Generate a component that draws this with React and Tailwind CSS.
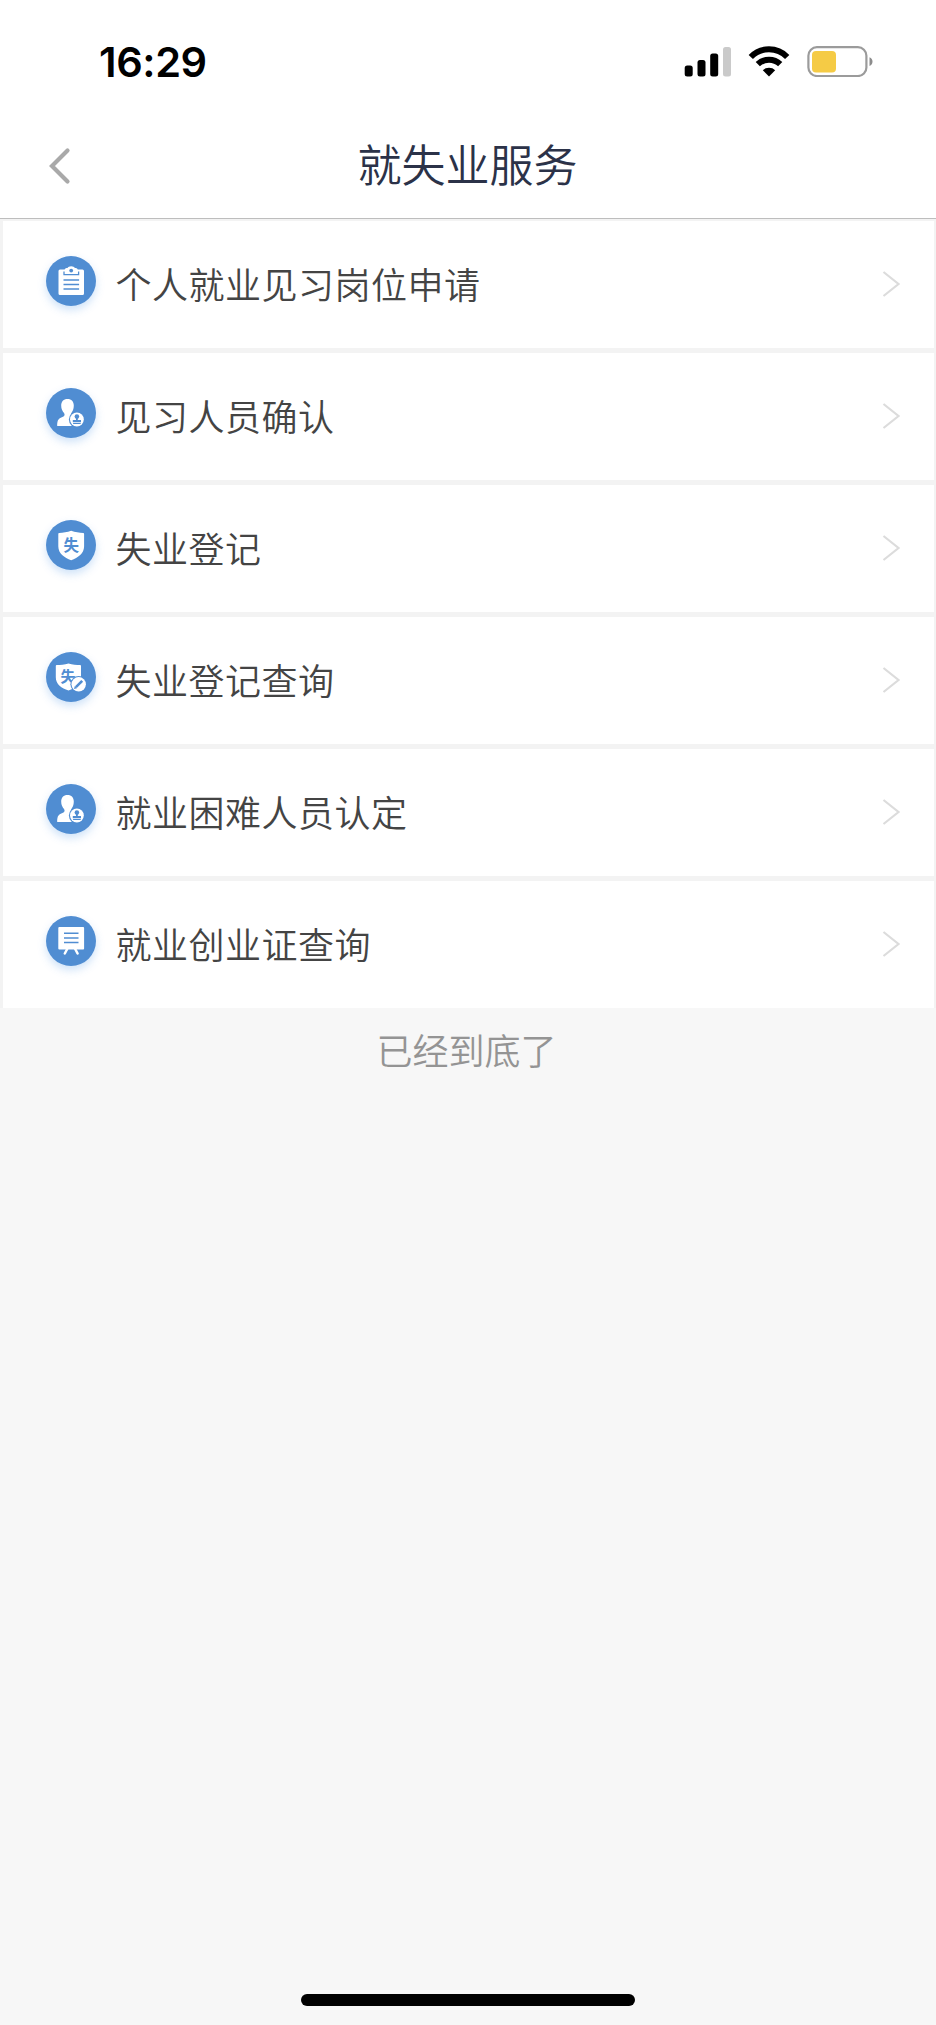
import React from 'react';

const ClipboardIcon = () => (
  <>
    <path
      d="M14 13.500h4.600c.6-1.200 1.700-1.400 2.900-1.500.6-1 1.900-1.700 3.700-1.700s3.100.7 3.700 1.700c1.200.1 2.300.3 2.900 1.500h4.700a1.500 1.500 0 0 1 1.500 1.500v22.500a1.500 1.500 0 0 1-1.500 1.500H14a1.500 1.500 0 0 1-1.500-1.500V15a1.500 1.500 0 0 1 1.500-1.500z"
      fill="#fff"
    />
    <circle cx="25.200" cy="14.600" r="1.900" fill="#508dd2" />
    <path
      d="M18 15.500v3.100h14.600v-3.100M17.500 24h15.600M17.500 28.500h15.600M17.500 33h15.600"
      fill="none"
      stroke="#508dd2"
      strokeWidth="1.300"
    />
  </>
);

const PersonIcon = () => (
  <>
    <path
      d="M21.500 11c4 0 6.300 2.600 6.300 6.800 0 3.200-1.200 5.500-2.400 7.200-.9 1.300-.7 3 .5 3.800l4.100 2.200v7H11.200c0-4.800.7-7.100 3.600-8.300l2.700-1.200c1.300-.9 1.400-2.300.5-3.600-1.600-1.900-2.800-4-2.800-7.100 0-4.200 2.300-6.800 6.300-6.800z"
      fill="#fff"
    />
    <circle cx="30.900" cy="31.500" r="8" fill="#508dd2" />
    <circle cx="30.900" cy="31.500" r="6.900" fill="#fff" />
    <circle cx="30.900" cy="28.600" r="2.300" fill="#508dd2" />
    <path d="M30 30h1.800v1.900H35v2.400h-8.200v-2.400H30zM27.100 35.100h7.600v1h-7.600z" fill="#508dd2" />
  </>
);

const ShieldIcon = () => (
  <>
    <path
      d="M25.200 10.700c4 1.500 8.200 2.100 12 2.200.6 0 .9.300.9.900v12.400c0 7.300-6 11.300-12.900 14-6.900-2.700-12.900-6.700-12.900-14V13.800c0-.6.300-.9.900-.9 3.800-.1 8-.7 12-2.200z"
      fill="#fff"
    />
    <text x="25.200" y="30.500" textAnchor="middle" fontSize="15.500" fontWeight="700" fill="#508dd2">
      失
    </text>
  </>
);

const ShieldEditIcon = () => (
  <>
    <path
      d="M22.500 11.400c4 1.300 8 1.500 11.600 1.600.6 0 .9.300.9.900v11.400c0 7.300-5.600 10.900-12.500 13.100-6.900-2.200-12.700-5.800-12.700-13.100V13.900c0-.6.300-.9.900-.9 3.700-.1 7.800-.3 11.800-1.600z"
      fill="#fff"
    />
    <text x="21.900" y="29.700" textAnchor="middle" fontSize="15" fontWeight="700" fill="#508dd2">
      失
    </text>
    <circle cx="32.700" cy="32.300" r="8.300" fill="#508dd2" />
    <circle cx="32.700" cy="32.300" r="7.200" fill="#fff" />
    <path d="M29.900 35.100l6.300-6.200" stroke="#508dd2" strokeWidth="2.600" />
    <path d="M28 37l.8-3 2.200 2.200z" fill="#508dd2" />
  </>
);

const BoardIcon = () => (
  <>
    <rect x="12.300" y="11" width="25.800" height="22.600" rx="1" fill="#fff" />
    <path d="M18 17.300h14.500M18 21.900h14.500M18 26.500h14.500" stroke="#508dd2" strokeWidth="1.500" />
    <path d="M21.200 33l-2.400 4.500M29.200 33l2.400 4.500" stroke="#fff" strokeWidth="2.500" strokeLinecap="round" />
  </>
);

const services = [
  { name: '个人就业见习岗位申请', Icon: ClipboardIcon },
  { name: '见习人员确认', Icon: PersonIcon },
  { name: '失业登记', Icon: ShieldIcon },
  { name: '失业登记查询', Icon: ShieldEditIcon },
  { name: '就业困难人员认定', Icon: PersonIcon },
  { name: '就业创业证查询', Icon: BoardIcon },
];

const StatusBar = () => (
  <div className="flex h-[124px] items-start justify-between pt-[45px] pr-[62px] pl-[99px]">
    <span className="font-['Inter'] text-[41.500px] leading-[34px] font-semibold tracking-[-0.400px] text-black">
      16:29
    </span>
    <div className="flex items-center">
      <svg width="48" height="32" viewBox="0 0 48 32">
        <rect x="0.700" y="20.500" width="8" height="11" rx="2.500" />
        <rect x="13.500" y="15" width="8" height="16.500" rx="2.500" />
        <rect x="26.200" y="8.500" width="8" height="23" rx="2.500" />
        <rect x="39" y="2" width="8" height="29.500" rx="2.500" fill="#cacaca" />
      </svg>
      <svg className="ml-[16px]" width="42" height="32" viewBox="0 0 42 32">
        <g fill="none" stroke="#000" strokeWidth="6">
          <path d="M2.800 12a25.400 25.400 0 0 1 36.400 0" />
          <path d="M9.800 19.200a16 16 0 0 1 22.400 0" />
        </g>
        <path d="M21 31.500l-6.200-6.300a9 9 0 0 1 12.400 0z" />
      </svg>
      <svg className="ml-[16px]" width="68" height="32" viewBox="0 0 68 32">
        <rect x="2.400" y="2.200" width="58" height="28.800" rx="8.500" fill="#fff" stroke="#9b9b9b" strokeWidth="2.200" />
        <rect x="6" y="6" width="24" height="21.500" rx="4" fill="#f5cb45" />
        <path d="M63.500 12.200c4 1.500 4 7.300 0 8.800z" fill="#8c8c8c" />
      </svg>
    </div>
  </div>
);

const NavBar = () => (
  <div className="flex h-[95px] items-center border-b border-[#bdbdbd] pb-[15px] pl-[48px]">
    <svg className="mt-[4px]" width="24" height="38" viewBox="0 0 24 38">
      <path
        d="M19.500 3.500L4 19l15.500 15.500"
        fill="none"
        stroke="#a9a9a9"
        strokeWidth="4.200"
        strokeLinecap="round"
      />
    </svg>
    <h1 className="mr-[73px] mb-[2px] flex-1 text-center text-[44px] leading-[44px] font-[350] text-[#2b3248]">
      就失业服务
    </h1>
  </div>
);

const ServiceRow = ({ name, Icon }) => (
  <li className="flex h-[127px] items-center bg-white pr-[33px] pl-[43px]">
    <svg
      className="mb-[7px] h-[50px] w-[50px] rounded-full bg-[#508dd2] shadow-[0_4px_8px_rgba(80,150,230,0.28)]"
      viewBox="0 0 50 50"
    >
      <Icon />
    </svg>
    <span className="mb-[3px] ml-[20px] flex-1 text-[36px] leading-[36px] font-[350] tracking-[0.5px] text-[#444]">
      {name}
    </span>
    <svg className="mb-[2px]" width="20" height="28" viewBox="0 0 20 28">
      <path d="M2.500 2l15 12-15 12" fill="none" stroke="#dcdcdc" strokeWidth="2.200" />
    </svg>
  </li>
);

const App = () => (
  <div className="flex h-[2025px] w-[936px] flex-col bg-[#f7f7f7] font-['Noto_Sans_CJK_SC',sans-serif]">
    <header className="bg-white">
      <StatusBar />
      <NavBar />
    </header>
    <ul className="flex flex-col gap-[5px] bg-[#f3f3f3] px-[2.500px] pt-[2px]">
      {services.map(service => (
        <ServiceRow key={service.name} {...service} />
      ))}
    </ul>
    <p className="mt-[23px] mr-[3px] text-center text-[36px] leading-[36px] font-[350] text-[#949494]">
      已经到底了
    </p>
    <div className="mx-auto mt-auto mb-[19px] h-[12px] w-[334px] rounded-full bg-black" />
  </div>
);

export default App;
